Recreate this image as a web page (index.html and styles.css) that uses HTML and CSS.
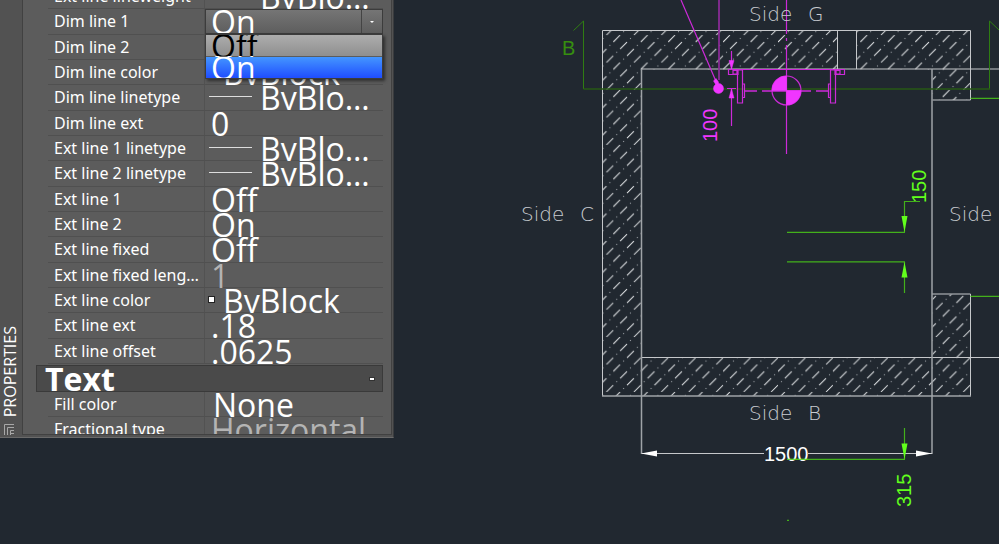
FILE: index.html
```html
<!DOCTYPE html>
<html lang="en">
<head>
<meta charset="utf-8">
<title>Drawing properties</title>
<link rel="stylesheet" href="styles.css">
</head>
<body>
<aside class="palette">
  <div class="rail">
    <span class="rail-title">PROPERTIES</span>
    <svg class="rail-icon" width="11" height="11" viewBox="0 0 11 11" aria-hidden="true">
      <path d="M10 .5H.5V11M10 3.5H3.500V11M10 6.500H6.500V11M6.500 9.500H10" fill="none" stroke="#a8a8a8"/>
    </svg>
  </div>
  <div class="sheet">
    <table class="props props-lines">
      <tbody>
        <tr><th>Ext line lineweight</th><td><span class="value typed"><i class="stroke"></i><b>ByBlock</b></span></td></tr>
        <tr><th><label for="dim1">Dim line 1</label></th><td class="combo">
          <select id="dim1"><option>On</option><option>Off</option></select>
          <span class="caret"></span>
          <ul class="menu"><li>Off</li><li class="active">On</li></ul>
        </td></tr>
        <tr><th>Dim line 2</th><td><span class="value">On</span></td></tr>
        <tr><th>Dim line color</th><td><span class="value tinted"><i class="chip"></i><b>ByBlock</b></span></td></tr>
        <tr><th>Dim line linetype</th><td><span class="value typed"><i class="stroke"></i><b>ByBlock</b></span></td></tr>
        <tr><th>Dim line ext</th><td><span class="value">0</span></td></tr>
        <tr><th>Ext line 1 linetype</th><td><span class="value typed"><i class="stroke"></i><b>ByBlock</b></span></td></tr>
        <tr><th>Ext line 2 linetype</th><td><span class="value typed"><i class="stroke"></i><b>ByBlock</b></span></td></tr>
        <tr><th>Ext line 1</th><td><span class="value">Off</span></td></tr>
        <tr><th>Ext line 2</th><td><span class="value">On</span></td></tr>
        <tr><th>Ext line fixed</th><td><span class="value">Off</span></td></tr>
        <tr><th>Ext line fixed length</th><td><span class="value muted">1</span></td></tr>
        <tr><th>Ext line color</th><td><span class="value tinted"><i class="chip"></i><b>ByBlock</b></span></td></tr>
        <tr><th>Ext line ext</th><td><span class="value">.18</span></td></tr>
        <tr><th>Ext line offset</th><td><span class="value">.0625</span></td></tr>
      </tbody>
    </table>
    <h2 class="section"><span>Text</span><button type="button" aria-label="Collapse Text"></button></h2>
    <table class="props props-text">
      <tbody>
        <tr><th>Fill color</th><td><span class="value">None</span></td></tr>
        <tr><th>Fractional type</th><td><span class="value muted">Horizontal</span></td></tr>
      </tbody>
    </table>
  </div>
</aside>
<main class="canvas">
  <svg class="drawing" viewBox="394 0 605 544" preserveAspectRatio="xMinYMin meet">
    <defs>
      <pattern id="hatch" patternUnits="userSpaceOnUse" x="613.300" y="35.100" width="27.450" height="27.450">
        <path d="M0 6.900L6.860 0M6.860 13.760L13.720 6.900M13.720 20.620L20.580 13.760M20.580 27.450L27.440 20.620" stroke="#e8eaec"/>
        <path d="M10 24.400L10.700 23.700M16.800 3.800L17.500 3.100M23.700 10.700L24.400 10M3.100 17.500L3.800 16.800" stroke="#a9adb2"/>
      </pattern>
    </defs>

    <!-- walls -->
    <path fill="url(#hatch)" d="M602.500 30.500H837.500V69.500H641.500V357.500H932.500V294.500H970.500V396H602.500ZM856.500 30.500H970.500V100H932.500V69.500H856.500Z"/>
    <g class="wall">
      <path d="M602.500 396V30.500H970.500V100H932.500M837.500 30.500V69M856.500 30.500V69M641 69H999M641 357.500H999M932 294H970.500V396"/>
      <path class="heavy" d="M641.500 69V454M932 69V454M602 396H971"/>
      <path d="M642 453.500H764M808 453.500H932"/>
    </g>
    <path fill="#fff" d="M641 453.500L657 450.500V456.500ZM932 453.500L916 450.500V456.500Z"/>

    <!-- section marker -->
    <path class="section-line" d="M573.500 30.500L583.500 21V89M989.500 89V21L999 30"/>
    <path class="section-line bold" d="M583.500 89H990"/>
    <text class="dim section-label" x="562" y="55">B</text>

    <!-- green dimensions -->
    <g class="green">
      <path d="M970.500 98.300H999M970.500 296.300H999M787 232.300H905M787 261.800H905M904.500 232V201.500H920M904.500 262V293M904.500 428V459M787 459.300H905M787 520.300H789"/>
      <path class="head" d="M904.500 232L901.500 216H907.500ZM904.500 262L901.500 277.500H907.500ZM904.500 459L901.500 443.500H907.500Z"/>
      <text class="dim" transform="translate(926 203) rotate(-90)">150</text>
      <text class="dim" transform="translate(911 507) rotate(-90)">315</text>
    </g>

    <!-- guide rail assembly -->
    <g class="magenta">
      <path d="M681 0L718 86M786.500 0V34M786.500 38V41M786.500 45V154M731.500 51V69M731.500 89V126M727 88.500H736"/>
      <path class="soft" d="M719 0V80"/>
      <path d="M728 69.500H845M728.500 70V74.500H738V70M733 70.500H737V74H733ZM835 70V74.500H844.500V70M836 70.500H840V74H836Z"/>
      <path d="M737.500 70H742.500V103H737.500ZM742.500 84H744.500V97.500H742.500ZM830.500 70H835.500V103H830.500ZM828.500 84H830.500V97.500H828.500Z"/>
      <path class="axis" d="M744.500 91H757M762 91H811M816 91H829"/>
      <circle cx="786.500" cy="90.500" r="14.500"/>
      <path class="fill" d="M786.500 90.500V76A14.500 14.500 0 0 0 772 90.500ZM786.500 90.500V105A14.500 14.500 0 0 0 801 90.500Z"/>
      <circle class="fill" cx="718.500" cy="88.500" r="5"/>
      <path class="fill" d="M716 78.500L713.500 81L718 88L718.500 82ZM731.500 69L729 60.500H734ZM731.500 89L729 98H734Z"/>
      <text class="dim" transform="translate(717 142) rotate(-90)">100</text>
    </g>

    <text class="dim" fill="#fff" x="764" y="461">1500</text>
    <path stroke="#4ecb18" d="M787 459.300H808"/>

    <!-- side names -->
    <g class="side">
      <text y="21"><tspan x="749">Side</tspan> <tspan x="808">G</tspan></text>
      <text y="221"><tspan x="521">Side</tspan> <tspan x="580">C</tspan></text>
      <text y="221"><tspan x="949">Side</tspan></text>
      <text y="420"><tspan x="749">Side</tspan> <tspan x="808">B</tspan></text>
    </g>
  </svg>
</main>
</body>
</html>
```
FILE: styles.css
```css
* { box-sizing: border-box; }

body {
  margin: 0;
  min-height: 100vh;
  display: flex;
  align-items: flex-start;
  background: #212830;
  font-family: "Noto Sans", "Open Sans", sans-serif;
  font-size: 16px;
  line-height: 25px;
  color: #fff;
  overflow: hidden;
}

/* palette shell */
.palette {
  flex: 0 0 394px;
  display: flex;
  background: #525252;
  border-right: 1px solid #3a3c3e;
  border-bottom: 1px solid #6a6a6a;
  padding: 0 1px 2px 0;
  overflow: hidden;
}
.rail {
  flex: 0 0 22px;
  display: flex;
  flex-direction: column;
  justify-content: flex-end;
  align-items: center;
  gap: 7px;
  padding-right: 3px;
}
.rail-title {
  writing-mode: vertical-rl;
  transform: rotate(180deg);
  font-family: "Open Sans", "Noto Sans", sans-serif;
  line-height: 18px;
}
.rail-icon { flex: none; }
.sheet {
  flex: 1;
  min-width: 0;
  max-height: 435px;
  overflow: hidden;
  background: #5c5c5c;
  border: solid #414141;
  border-width: 0 1px 1px;
  padding: 0 8px 0 13px;
}

/* property rows */
.props {
  display: block;
  margin-left: 12px;
}
.props tbody {
  display: grid;
  grid-auto-rows: minmax(0, 1fr);
}
.props-lines { margin-top: -16px; }
.props-lines tbody { height: 380px; }
.props-text tbody { height: 50px; }
.props tr {
  display: grid;
  grid-template-columns: 157px 1fr;
  grid-template-rows: minmax(0, 1fr);
  border-bottom: 1px solid #505050;
}
.props th,
.props td {
  display: block;
  min-width: 0;
  padding: 0;
}
.props th {
  padding: 0 3px 0 6px;
  font-weight: 400;
  text-align: left;
  white-space: nowrap;
  overflow: hidden;
  text-overflow: ellipsis;
  border-right: 1px solid #525252;
}

.value {
  display: block;
  height: 25px;
  overflow: hidden;
  padding-left: 6px;
  font-family: "Open Sans", "Noto Sans", sans-serif;
  font-size: 32px;
  white-space: nowrap;
}
.value b {
  font-weight: 400;
  overflow: hidden;
  text-overflow: ellipsis;
}
.typed,
.tinted {
  display: flex;
  align-items: center;
  gap: 8px;
  padding: 0 12px 0 4px;
}
.tinted { padding-left: 3px; }
.stroke {
  flex: 0 0 43px;
  height: 1px;
  margin-bottom: 2px;
  background: #ddd;
}
.chip {
  flex: none;
  width: 7px;
  height: 7px;
  margin-bottom: 3px;
  background: #fff;
  border: 1px solid #222;
}
.muted { color: #b4b4b4; }
.props-text .value { padding-left: 8px; }
.props-text .muted { padding-left: 6px; }

/* open drop-down */
.combo { position: relative; }
.combo select {
  appearance: none;
  display: block;
  width: 100%;
  height: 25px;
  margin: 0;
  padding: 0 0 0 5px;
  border: 1px solid #3c3c3c;
  border-radius: 0;
  background: linear-gradient(#757575, #5e5e5e);
  color: #fff;
  font: 32px/23px "Open Sans", "Noto Sans", sans-serif;
}
.caret {
  position: absolute;
  top: 1px;
  right: 1px;
  width: 21px;
  height: 23px;
  border-left: 1px solid #444;
  pointer-events: none;
}
.caret::after {
  content: "";
  position: absolute;
  left: 8px;
  top: 11px;
  border: 2px solid transparent;
  border-top-color: #fff;
}
.menu {
  position: absolute;
  z-index: 1;
  top: 25px;
  left: 0;
  right: 0;
  margin: 0;
  padding: 0;
  list-style: none;
  border: 1px solid #3c3c3c;
  box-shadow: 2px 2px 3px rgba(0, 0, 0, .5);
  font-family: "Open Sans", "Noto Sans", sans-serif;
  font-size: 32px;
  line-height: 21px;
}
.menu li {
  height: 21px;
  padding-left: 5px;
  overflow: hidden;
  background: linear-gradient(#adadad, #8f8f8f);
  color: #000;
}
.menu .active {
  margin-top: 1px;
  background: linear-gradient(#4496ff, #1f4dff);
  color: #fff;
}

/* section header */
.section {
  display: flex;
  justify-content: space-between;
  align-items: center;
  height: 27px;
  margin: 1px 0 0;
  padding: 0 7px 0 8px;
  overflow: hidden;
  background: #4a4a4a;
  border: 1px solid #3a3a3a;
  font-family: "Open Sans", "Noto Sans", sans-serif;
  font-size: 32px;
  font-weight: 700;
}
.section button {
  width: 6px;
  height: 4px;
  padding: 0;
  border: 1px solid #333;
  background: #fff;
}

/* drawing */
.canvas {
  flex: 1;
  min-width: 0;
}
.drawing {
  display: block;
  width: 100%;
  height: auto;
}
.wall path { fill: none; stroke: #c6c8cb; }
.wall .heavy { stroke: #9fa3a7; stroke-width: 1.500; }
.section-line { fill: none; stroke: #2f7d12; }
.section-line.bold { stroke: #275914; stroke-width: 1.500; }
.dim {
  font-family: "Liberation Sans", Arial, sans-serif;
  font-size: 20px;
}
.section-label { fill: #368f0f; }
.green path { fill: none; stroke: #43b01b; stroke-width: 1.200; }
.green .head { fill: #62ff1c; stroke: none; }
.green .dim { fill: #62ff1c; }
.magenta path,
.magenta circle { fill: none; stroke: #cc2ad8; stroke-width: 1.200; }
.magenta .soft { stroke: #8e2b9b; stroke-width: 1.700; }
.magenta .axis { stroke-width: 1.700; }
.magenta .fill { fill: #f036ff; stroke: #f036ff; stroke-width: .5; }
.magenta .dim { fill: #f036ff; }
.side text {
  font-family: "DejaVu Sans Light", "DejaVu Sans", sans-serif;
  font-size: 20px;
  font-weight: 200;
  fill: #c9ccd0;
}
```
